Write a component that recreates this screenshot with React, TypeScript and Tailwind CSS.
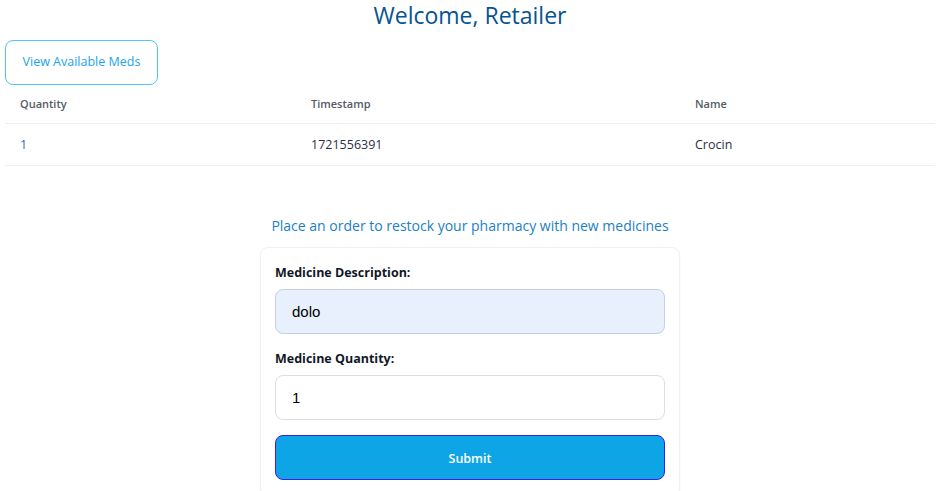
import { useState } from "react";

const ORDERS = [{ quantity: "1", timestamp: "1721556391", name: "Crocin" }];

export default function App() {
  const [desc, setDesc] = useState("dolo");
  const [qty, setQty] = useState("1");

  return (
    <div className="min-h-screen bg-white pr-1 font-['Open_Sans',sans-serif]">
      <h1 className="text-center text-[23px] leading-[30px] font-medium text-[#065390]">Welcome, Retailer</h1>

      <div className="px-[5px] mt-[10px]">
        <button className="h-[45px] w-[153px] rounded-lg border border-[#4cc7f5] text-[12.5px] text-[#1aa3f0] bg-white">
          View Available Meds
        </button>

        <table className="w-[930px] border-collapse text-left">
          <thead>
            <tr className="border-b border-[#f0f0f0]">
              <th className="w-[291px] pl-[15px] py-[11px] text-[11px] leading-4 font-semibold text-[#555b66]">Quantity</th>
              <th className="w-[384px] pl-[15px] py-[11px] text-[11px] leading-4 font-semibold text-[#555b66]">Timestamp</th>
              <th className="pl-[15px] py-[11px] text-[11px] leading-4 font-semibold text-[#555b66]">Name</th>
            </tr>
          </thead>
          <tbody>
            {ORDERS.map((o, i) => (
              <tr key={i} className="border-b border-[#f0f0f0]">
                <td className="pl-[15px] py-3 text-[12.5px] leading-[17px] text-[#1a6fb8]">{o.quantity}</td>
                <td className="pl-[15px] py-3 text-[12.5px] leading-[17px] text-[#2b2f45]">{o.timestamp}</td>
                <td className="pl-[15px] py-3 text-[12.5px] leading-[17px] text-[#2b2f45]">{o.name}</td>
              </tr>
            ))}
          </tbody>
        </table>
      </div>

      <p className="mt-[50px] text-center text-[14px] leading-5 text-[#1b7fc4]">
        Place an order to restock your pharmacy with new medicines
      </p>

      <div className="mx-auto mt-[11px] w-[420px] rounded-lg border border-[#f1f1f1] bg-white px-[14px] pt-4 pb-4 shadow-[0_1px_3px_rgba(0,0,0,0.04)]">
        <label className="block text-[12.5px] leading-[18px] font-bold text-[#111827]">Medicine Description:</label>
        <input
          value={desc}
          onChange={(e) => setDesc(e.target.value)}
          className="mt-[7px] block h-[45px] w-full rounded-lg border border-[#c7cfe0] bg-[#e8f0fe] px-4 text-[15px] text-black outline-none font-['Liberation_Sans',sans-serif]"
        />
        <label className="mt-4 block text-[12.5px] leading-[18px] font-bold text-[#111827]">Medicine Quantity:</label>
        <input
          value={qty}
          onChange={(e) => setQty(e.target.value)}
          className="mt-[7px] block h-[45px] w-full rounded-lg border border-[#dedede] bg-white px-4 text-[15px] text-black outline-none font-['Liberation_Sans',sans-serif]"
        />
        <button className="mt-[15px] h-[45px] w-full rounded-lg border border-[#3a1df0] bg-[#0ea5e6] pt-[3px] text-[12.5px] font-semibold text-white">
          Submit
        </button>
      </div>
    </div>
  );
}
